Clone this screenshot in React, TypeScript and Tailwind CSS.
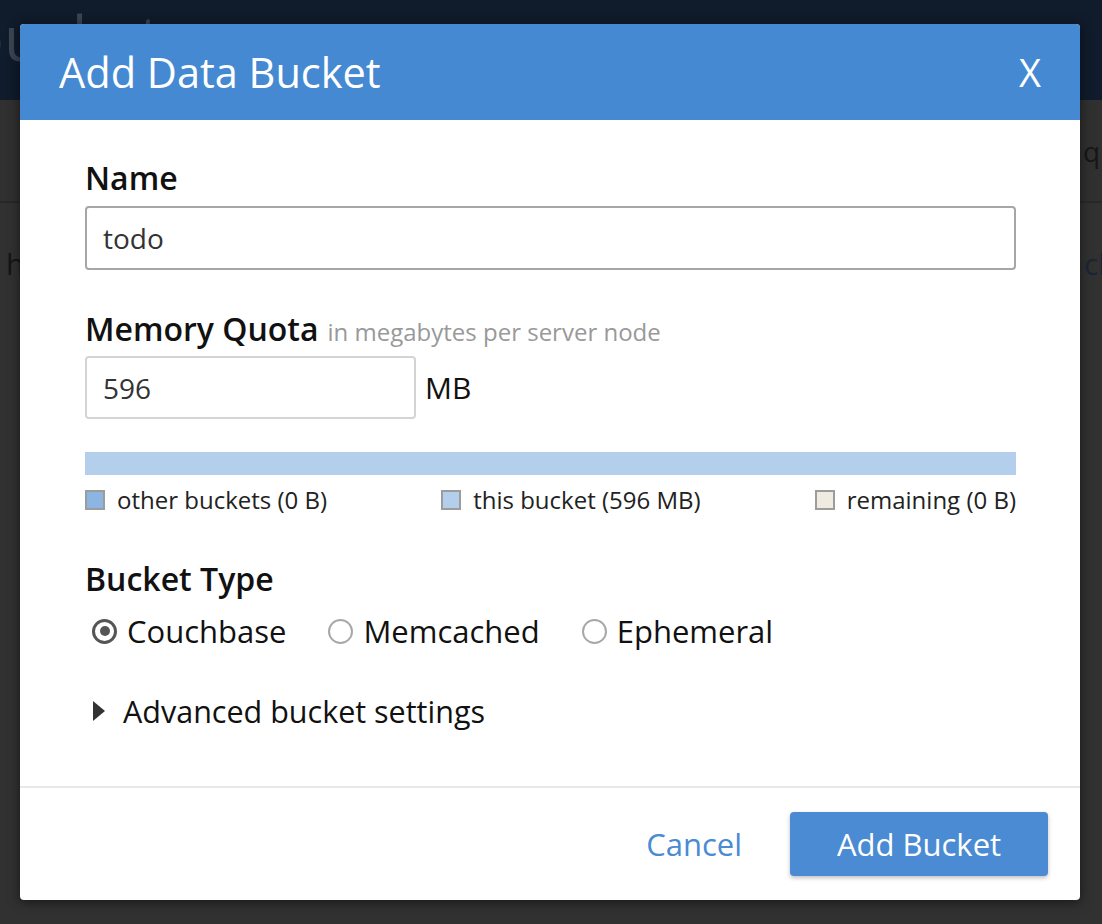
import React from "react";

function Radio({ checked, label }: { checked?: boolean; label: string }) {
  return (
    <div className="flex items-center gap-[10px]">
      {checked ? (
        <span className="w-[25px] h-[25px] rounded-full border-[3px] border-[#555555] flex items-center justify-center">
          <span className="w-[10px] h-[10px] rounded-full bg-[#555555]" />
        </span>
      ) : (
        <span className="w-[25px] h-[25px] rounded-full border-2 border-[#a8a8a8]" />
      )}
      <span className="text-[31px] leading-[40px] text-[#111111]">{label}</span>
    </div>
  );
}

function Legend({ color, label }: { color: string; label: string }) {
  return (
    <div className="flex items-center gap-[12px]">
      <span className={`w-[20px] h-[20px] border-2 border-[#9c9c9c] ${color}`} />
      <span className="text-[24px] leading-[32px] text-[#222222]">{label}</span>
    </div>
  );
}

export default function App() {
  return (
    <div className="relative w-[1102px] h-[924px] overflow-hidden bg-[#313131] font-['Open_Sans','Noto_Sans',sans-serif]">
      {/* dimmed page behind the modal */}
      <div className="h-[100px] bg-[#101b2b] flex items-start">
        <span className="-ml-[34px] mt-[2px] text-[62px] leading-[70px] text-[#3a4452] whitespace-nowrap">buckets</span>
      </div>
      <div className="h-[103px] bg-[#303030] border-b-2 border-[#282828] flex items-center justify-end">
        <span className="w-[19px] overflow-hidden whitespace-nowrap text-[28px] text-[#161616]">queries</span>
      </div>
      <div className="h-[120px] flex items-center justify-between">
        <span className="ml-[6px] text-[30px] text-[#151515]">h</span>
        <span className="w-[18px] overflow-hidden whitespace-nowrap text-[30px] text-[#1a2535]">ckets</span>
      </div>

      {/* modal */}
      <div className="absolute left-[20px] top-[24px] w-[1060px] h-[876px] bg-white rounded-[4px] shadow-[0_2px_12px_rgba(0,0,0,0.55)] flex flex-col overflow-hidden">
        <div className="h-[96px] bg-[#4589d2] flex items-center justify-between pl-[39px] pr-[39px]">
          <span className="text-[41.5px] leading-[50px] text-white">Add Data Bucket</span>
          <span className="text-[38px] leading-[50px] text-white">X</span>
        </div>

        <div className="flex-1 pl-[65px] pr-[64px] pt-[36px] text-[#111111]">
          <div className="text-[32px] leading-[44px] font-semibold">Name</div>
          <div className="mt-[6px] h-[64px] border-2 border-[#a6a6a6] rounded-[4px] flex items-center px-[16px]">
            <span className="text-[28px] text-[#333333]">todo</span>
          </div>

          <div className="mt-[37px] h-[44px] flex items-baseline">
            <span className="text-[32px] leading-[44px] font-semibold">Memory Quota</span>
            <span className="ml-[9px] text-[24px] leading-[44px] text-[#999999]">in megabytes per server node</span>
          </div>
          <div className="mt-[5px] flex items-center">
            <div className="w-[331px] h-[63px] border-2 border-[#d4d4d4] rounded-[4px] flex items-center px-[16px]">
              <span className="text-[28px] text-[#333333]">596</span>
            </div>
            <span className="ml-[9px] text-[30px] text-[#111111]">MB</span>
          </div>

          <div className="mt-[33px] h-[23px] bg-[#b3cfec]" />
          <div className="mt-[9px] h-[32px] flex items-center justify-between">
            <Legend color="bg-[#8cb5e2]" label="other buckets (0 B)" />
            <Legend color="bg-[#b3cfec]" label="this bucket (596 MB)" />
            <Legend color="bg-[#efebe1]" label="remaining (0 B)" />
          </div>

          <div className="mt-[41px] text-[32px] leading-[44px] font-semibold">Bucket Type</div>
          <div className="mt-[10px] h-[40px] flex items-center gap-[42px] ml-[7px]">
            <Radio checked label="Couchbase" />
            <Radio label="Memcached" />
            <Radio label="Ephemeral" />
          </div>

          <div className="mt-[40px] h-[40px] flex items-center ml-[8px] gap-[18px]">
            <span className="w-0 h-0 border-y-[10px] border-y-transparent border-l-[12px] border-l-[#333333]" />
            <span className="text-[30.5px] leading-[40px] text-[#111111]">Advanced bucket settings</span>
          </div>
        </div>

        <div className="border-t-2 border-[#e8e8e8] pt-[24px] pb-[24px] pr-[32px] flex items-center justify-end gap-[48px]">
          <span className="text-[31px] text-[#4a8bd3]">Cancel</span>
          <div className="w-[258px] h-[64px] rounded-[4px] bg-[#4a8bd4] shadow-[0_2px_4px_rgba(0,0,0,0.25)] flex items-center justify-center">
            <span className="text-[31px] text-white">Add Bucket</span>
          </div>
        </div>
      </div>
    </div>
  );
}
